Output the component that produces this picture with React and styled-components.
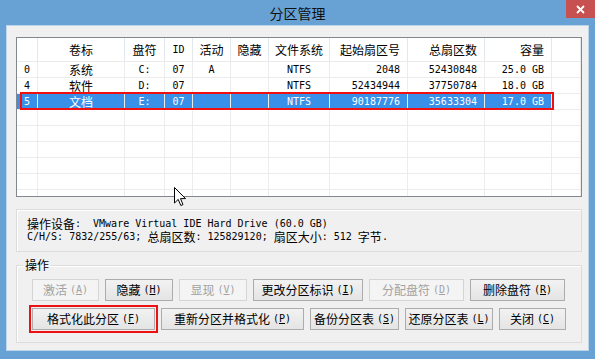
import React from "react";
import styled, { createGlobalStyle } from "styled-components";

const Global = createGlobalStyle`
  html, body { margin: 0; padding: 0; }
  body {
    background: #68a2d4;
    font-family: "Noto Sans CJK SC", "Noto Sans", sans-serif;
    font-size: 12px;
    color: #000;
  }
`;

const COLS = "21px 87px 40px 28px 38px 38px 61px 78px 77px 67px 1fr";

const Frame = styled.div`
  position: relative;
  width: 595px;
  height: 359px;
  box-sizing: border-box;
  background: #68a2d4;
  padding: 0 6px 8px 6px;
  display: flex;
  flex-direction: column;
  overflow: hidden;
`;

const TitleBar = styled.div`
  height: 25px;
  flex: none;
  margin: 0 -6px;
  display: grid;
  grid-template-columns: 1fr auto 1fr;
`;

const Title = styled.div`
  grid-column: 2;
  font-size: 14px;
  line-height: 26px;
  color: #111;
`;

const Close = styled.div`
  grid-column: 3;
  justify-self: end;
  align-self: start;
  width: 29px;
  height: 18px;
  background: #c75050;
  display: flex;
  align-items: center;
  justify-content: center;
`;

const Client = styled.div`
  flex: 1;
  box-sizing: border-box;
  background: #f0f0f0;
  border: 1px solid #bcd6ec;
  padding: 11px 6px 7px 9px;
  display: flex;
  flex-direction: column;
`;

const ListView = styled.div`
  position: relative;
  height: 160px;
  flex: none;
  box-sizing: border-box;
  background: #fff;
  border: 1px solid #828790;
  overflow: hidden;
`;

const Row = styled.div`
  display: grid;
  grid-template-columns: ${COLS};
  height: ${(p) => p.$h}px;
`;

const Cell = styled.div`
  box-sizing: border-box;
  border-right: 1px solid ${(p) => (p.$head ? "#e3e7ee" : "#ececec")};
  border-bottom: 1px solid ${(p) => (p.$head ? "#eaeaea" : "#ececec")};
  background: ${(p) => (p.$sel ? "#3890e8" : "#fff")};
  color: ${(p) => (p.$sel ? "#fff" : "#000")};
  display: flex;
  align-items: center;
  justify-content: ${(p) =>
    p.$align === "left" ? "flex-start" : p.$align === "right" ? "flex-end" : "center"};
  padding: ${(p) =>
    p.$align === "left" ? "0 0 0 7px" : p.$align === "right" ? "0 7px 0 0" : "0"};
  font-family: ${(p) =>
    p.$mono ? '"DejaVu Sans Mono", monospace' : '"Noto Sans CJK SC", sans-serif'};
  font-size: ${(p) => (p.$mono ? "10px" : "12px")};
  line-height: 14px;
  white-space: nowrap;
  overflow: hidden;
`;

const RedBox = styled.div`
  position: absolute;
  left: 3px;
  top: 54px;
  width: 534px;
  height: 18px;
  box-sizing: border-box;
  border: 2px solid #f01010;
  pointer-events: none;
`;

const Mono = styled.span`
  display: inline-block;
  font-family: "DejaVu Sans Mono", monospace;
  font-size: 10px;
  line-height: 13px;
  white-space: pre;
  margin-left: ${(p) => p.$indent || 0}px;
`;

const Han = styled.span`
  display: inline-block;
  line-height: 13px;
`;

const InfoBox = styled.div`
  margin-top: 12px;
  height: 43px;
  box-sizing: border-box;
  border: 1px solid #dcdcdc;
  box-shadow: inset 1px 1px 0 #fff;
  padding: 7px 10px 8px;
`;

const InfoLine = styled.div`
  display: flex;
  align-items: center;
  line-height: 13px;
  height: 13px;
  white-space: nowrap;
`;

const Group = styled.fieldset`
  margin: 6px 0 0 0;
  padding: 7px 15px 12px 15px;
  border: 1px solid #dcdcdc;
  box-shadow: inset 1px 1px 0 #fff;
  min-inline-size: 0;
  display: flex;
  flex-direction: column;
  gap: 7px;
`;

const Legend = styled.legend`
  margin-left: -9px;
  padding: 0 2px;
  font-size: 12px;
  line-height: 14px;
`;

const BtnRow = styled.div`
  display: flex;
  gap: 6px;
`;

const Btn = styled.button`
  width: ${(p) => p.$w}px;
  height: 22px;
  box-sizing: border-box;
  padding: 0;
  margin: 0;
  border: 1px solid #acacac;
  border-radius: 0;
  background: linear-gradient(#f2f2f2, #e4e4e4);
  color: #000;
  font-family: "Noto Sans CJK SC", sans-serif;
  font-size: 12px;
  line-height: 14px;
  display: flex;
  align-items: center;
  justify-content: center;
  white-space: nowrap;
  outline: ${(p) => (p.$marked ? "2px solid #ee1111" : "none")};
  outline-offset: 1px;

  &:disabled {
    border-color: #d5d5d5;
    background: #f4f4f4;
    color: #a2a2a2;
  }
`;

const Key = styled.span`
  font-family: "DejaVu Sans Mono", monospace;
  font-size: 10px;
  margin-left: 3px;
  u { text-underline-offset: 1px; }
`;

const Cursor = styled.svg`
  position: absolute;
  left: 174px;
  top: 187px;
  pointer-events: none;
`;

const header = [
  ["", "left"],
  ["卷标", "center"],
  ["盘符", "center"],
  ["ID", "center", true],
  ["活动", "center"],
  ["隐藏", "center"],
  ["文件系统", "center"],
  ["起始扇区号", "right"],
  ["总扇区数", "right"],
  ["容量", "right"],
  ["", "center"],
];

const aligns = ["left", "center", "center", "center", "center", "center", "center", "right", "right", "right", "center"];
const monoCols = [true, false, true, true, true, true, true, true, true, true, true];

const rows = [
  { v: ["0", "系统", "C:", "07", "A", "", "NTFS", "2048", "52430848", "25.0 GB", ""] },
  { v: ["4", "软件", "D:", "07", "", "", "NTFS", "52434944", "37750784", "18.0 GB", ""] },
  { v: ["5", "文档", "E:", "07", "", "", "NTFS", "90187776", "35633304", "17.0 GB", ""], sel: true },
];
const emptyRows = 6;

const buttons1 = [
  { w: 67, t: "激活", k: "A", dis: true },
  { w: 68, t: "隐藏", k: "H" },
  { w: 68, t: "显现", k: "V", dis: true },
  { w: 110, t: "更改分区标识", k: "I" },
  { w: 95, t: "分配盘符", k: "D", dis: true },
  { w: 95, t: "删除盘符", k: "R" },
];
const buttons2 = [
  { w: 123, t: "格式化此分区", k: "F", marked: true },
  { w: 143, t: "重新分区并格式化", k: "P" },
  { w: 89, t: "备份分区表", k: "S" },
  { w: 88, t: "还原分区表", k: "L" },
  { w: 67, t: "关闭", k: "C" },
];

function Button({ b }) {
  return (
    <Btn $w={b.w} $marked={b.marked} disabled={b.dis}>
      {b.t}
      <Key>
        (<u>{b.k}</u>)
      </Key>
    </Btn>
  );
}

export default function App() {
  return (
    <>
      <Global />
      <Frame>
        <TitleBar>
          <Title>分区管理</Title>
          <Close>
            <svg width="9" height="9" viewBox="0 0 9 9">
              <path d="M1 1 L8 8 M8 1 L1 8" stroke="#fff" strokeWidth="1.8" />
            </svg>
          </Close>
        </TitleBar>
        <Client>
          <ListView>
            <Row $h={24}>
              {header.map(([t, a, m], i) => (
                <Cell key={i} $head $align={a} $mono={m}>
                  {t}
                </Cell>
              ))}
            </Row>
            {rows.map((r, ri) => (
              <Row key={ri} $h={16}>
                {r.v.map((t, i) => (
                  <Cell key={i} $align={aligns[i]} $mono={monoCols[i]} $sel={r.sel && i < 10}>
                    {t}
                  </Cell>
                ))}
              </Row>
            ))}
            {Array.from({ length: emptyRows }).map((_, ri) => (
              <Row key={"e" + ri} $h={16}>
                {aligns.map((a, i) => (
                  <Cell key={i} $align={a} />
                ))}
              </Row>
            ))}
            <RedBox />
          </ListView>

          <InfoBox>
            <InfoLine>
              <Han>操作设备</Han>
              <Mono>:</Mono>
              <Mono $indent={12}>VMware Virtual IDE Hard Drive (60.0 GB)</Mono>
            </InfoLine>
            <InfoLine>
              <Mono>C/H/S: 7832/255/63; </Mono>
              <Han>总扇区数</Han>
              <Mono>: 125829120; </Mono>
              <Han>扇区大小</Han>
              <Mono>: 512 </Mono>
              <Han>字节</Han>
              <Mono>.</Mono>
            </InfoLine>
          </InfoBox>

          <Group>
            <Legend>操作</Legend>
            <BtnRow>
              {buttons1.map((b, i) => (
                <Button key={i} b={b} />
              ))}
            </BtnRow>
            <BtnRow>
              {buttons2.map((b, i) => (
                <Button key={i} b={b} />
              ))}
            </BtnRow>
          </Group>
        </Client>
        <Cursor width="13" height="20" viewBox="0 0 13 20">
          <path
            d="M0.5 0.5 L0.5 16 L4.2 12.4 L6.8 18.5 L9 17.6 L6.5 11.6 L11.5 11.6 Z"
            fill="#fff"
            stroke="#000"
            strokeWidth="1"
            strokeLinejoin="miter"
          />
        </Cursor>
      </Frame>
    </>
  );
}
